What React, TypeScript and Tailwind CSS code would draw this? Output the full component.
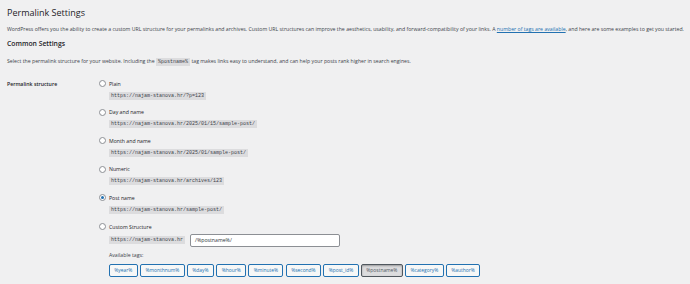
const options = [
    { label: "Plain", code: "https://najam-stanova.hr/?p=123" },
    { label: "Day and name", code: "https://najam-stanova.hr/2025/01/15/sample-post/" },
    { label: "Month and name", code: "https://najam-stanova.hr/2025/01/sample-post/" },
    { label: "Numeric", code: "https://najam-stanova.hr/archives/123" },
    { label: "Post name", code: "https://najam-stanova.hr/sample-post/", checked: true },
]

const tags = ["%year%", "%monthnum%", "%day%", "%hour%", "%minute%", "%second%", "%post_id%", "%postname%", "%category%", "%author%"]

function Radio({ checked }: { checked?: boolean }) {
    return (
        <span className="flex h-[7px] w-[7px] flex-none items-center justify-center rounded-full border border-[#8c8f94] bg-white">
            {checked && <span className="h-[3px] w-[3px] rounded-full bg-[#2271b1]"></span>}
        </span>
    )
}

function Code({ children }: { children: string }) {
    return (
        <code className="inline-block h-[8px] bg-[#dcdcde] px-[2px] align-middle font-['Liberation_Mono',monospace] text-[5px] leading-[8px] text-[#3c434a]">
            {children}
        </code>
    )
}

export default function App() {
    return (
        <div className="h-[284px] overflow-hidden bg-[#f0f0f1] pl-[7px] pt-[7px] font-['Open_Sans',sans-serif] text-[5.2px] leading-[8px] text-[#3c434a]">
            <h1 className="text-[9px] leading-[12px] text-[#1d2327]">Permalink Settings</h1>
            <p className="mt-[6px] whitespace-nowrap">
                WordPress offers you the ability to create a custom URL structure for your permalinks and archives. Custom URL structures can improve the aesthetics, usability, and forward-compatibility of your links. A{" "}
                <a className="text-[#2271b1] underline">number of tags are available</a>, and here are some examples to get you started.
            </p>
            <h2 className="mt-[6px] text-[6.8px] font-semibold leading-[10px] text-[#1d2327]">Common Settings</h2>
            <p className="mt-[8px] whitespace-nowrap">
                Select the permalink structure for your website. Including the <Code>%postname%</Code> tag makes links easy to understand, and can help your posts rank higher in search engines.
            </p>

            <div className="mt-[14px] flex">
                <div className="w-[92px] flex-none font-semibold text-[#1d2327]">Permalink structure</div>
                <div className="flex flex-col gap-[8.6px]">
                    {options.map((o) => (
                        <div key={o.label} className="flex flex-col">
                            <div className="flex h-[8px] items-center gap-[3px] text-[#1d2327]">
                                <Radio checked={o.checked} />
                                <span>{o.label}</span>
                            </div>
                            <div className="mt-[4px] flex pl-[10px]">
                                <Code>{o.code}</Code>
                            </div>
                        </div>
                    ))}
                    <div className="flex flex-col">
                        <div className="flex h-[8px] items-center gap-[3px] text-[#1d2327]">
                            <Radio />
                            <span>Custom Structure</span>
                        </div>
                        <div className="mt-[3px] flex items-center gap-[5px] pl-[10px]">
                            <Code>https://najam-stanova.hr</Code>
                            <div className="flex h-[13px] w-[150px] items-center rounded-[2px] border border-[#8c8f94] bg-white px-[4px] text-[#2c3338]">
                                /%postname%/
                            </div>
                        </div>
                        <div className="mt-[4px] pl-[10px]">Available tags:</div>
                        <div className="mt-[5px] flex gap-[2.5px] pl-[10px]">
                            {tags.map((t) => (
                                <span
                                    key={t}
                                    className={
                                        t === "%postname%"
                                            ? "flex h-[13px] items-center rounded-[2px] border border-[#50575e] bg-[#dcdcde] px-[4.3px] text-[4.9px] text-[#50575e] shadow-[inset_0_1px_2px_rgba(0,0,0,0.3)]"
                                            : "flex h-[13px] items-center rounded-[2px] border border-[#2271b1] bg-[#f6f7f7] px-[4.3px] text-[4.9px] text-[#2271b1]"
                                    }
                                >
                                    {t}
                                </span>
                            ))}
                        </div>
                    </div>
                </div>
            </div>
        </div>
    )
}
